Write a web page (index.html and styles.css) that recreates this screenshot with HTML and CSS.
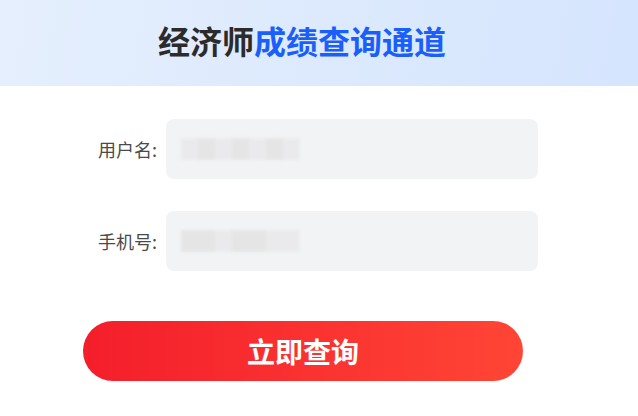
FILE: index.html
```html
<!DOCTYPE html>
<html>
    <head>
        <title>经济师成绩查询通道</title>
        <link rel="stylesheet" href="styles.css">
    </head>
<body>
    <div class="banner">
        <h1 class="title">经济师<span class="hl">成绩查询通道</span></h1>
    </div>
    <div class="query-form">
        <div class="form-row">
            <span class="label">用户名:</span>
            <div class="field">
                <div class="mosaic">
                    <i></i><i class="d"></i><i></i><i class="d"></i><i></i><i class="d"></i><i></i>
                </div>
            </div>
        </div>
        <div class="form-row">
            <span class="label">手机号:</span>
            <div class="field">
                <div class="mosaic">
                    <i class="d"></i><i class="d"></i><i></i><i class="d"></i><i class="d"></i><i></i><i></i>
                </div>
            </div>
        </div>
        <div class="submit">立即查询</div>
    </div>
</body>
</html>
```

FILE: styles.css
```css
body {
    margin: 0;
    background: #fff;
    font-family: "Noto Sans CJK SC", "Noto Sans", sans-serif;
}

.banner {
    height: 86px;
    background: linear-gradient(100deg, #e5effd 0%, #d5e5fd 100%);
    box-sizing: border-box;
    padding-left: 158px;
}

.title {
    margin: 0;
    font-size: 32px;
    line-height: 80px;
    font-weight: 700;
    color: #2b2b2b;
}

.title .hl {
    color: #1b5ffb;
}

.query-form {
    width: 455px;
    margin: 33px 0 0 83px;
}

.form-row {
    display: flex;
    align-items: center;
    gap: 9px;
    margin-bottom: 32px;
}

.label {
    width: 74px;
    text-align: right;
    font-size: 18px;
    color: #4a4a4a;
}

.field {
    flex: 1;
    height: 60px;
    border-radius: 8px;
    background: #f2f3f5;
    display: flex;
    align-items: center;
    padding-left: 15px;
}

.mosaic {
    display: flex;
    height: 22px;
    filter: blur(1.5px);
    opacity: 0.8;
}

.mosaic i {
    width: 17px;
    height: 22px;
    background: #e9e9ea;
}

.mosaic i.d {
    background: #e2e2e3;
}

.submit {
    width: 440px;
    margin-top: 50px;
    height: 60px;
    border-radius: 30px;
    background: linear-gradient(90deg, #f41e2b 0%, #ff4535 100%);
    color: #fff;
    font-size: 28px;
    font-weight: 700;
    display: flex;
    align-items: center;
    justify-content: center;
    cursor: pointer;
}
```
